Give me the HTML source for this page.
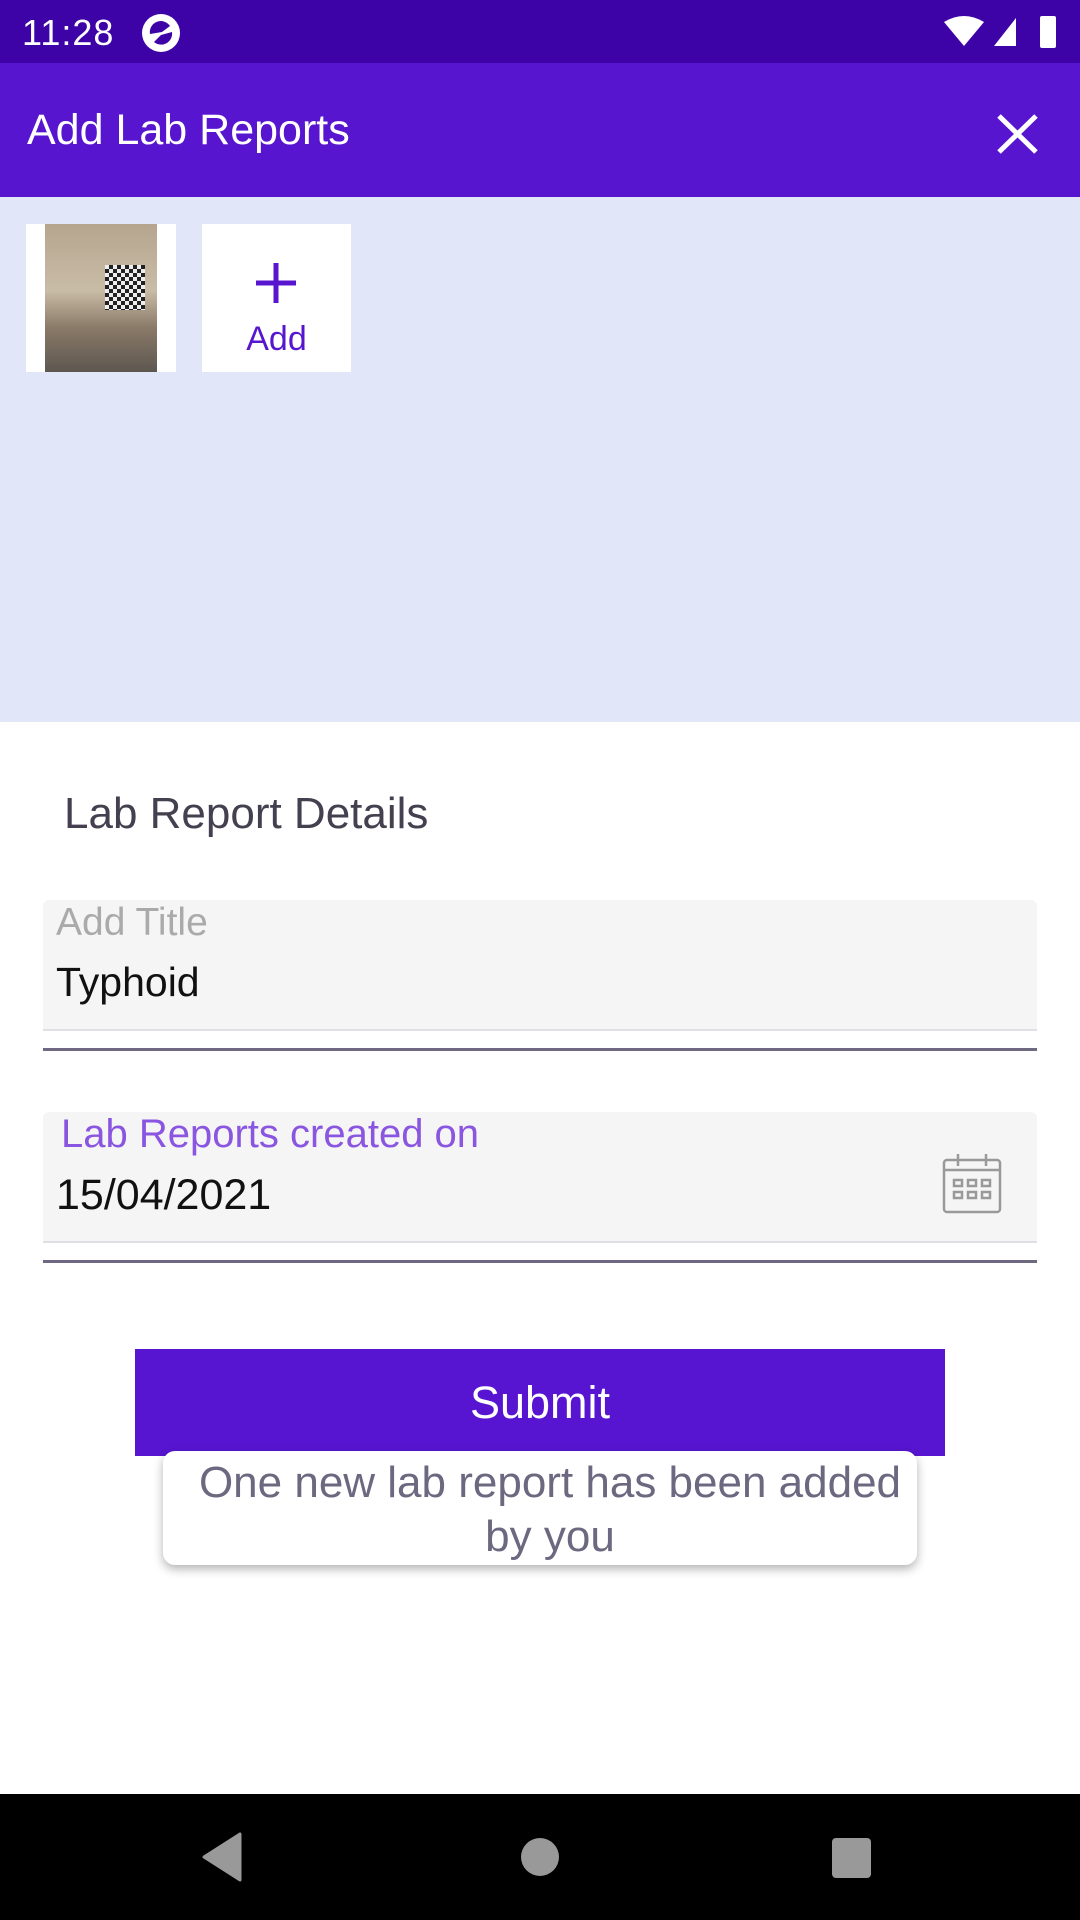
<!DOCTYPE html>
<html><head><meta charset="utf-8"><style>
*{margin:0;padding:0;box-sizing:border-box}
body{width:1080px;height:1920px;position:relative;background:#fff;font-family:"Liberation Sans",sans-serif;overflow:hidden}
.a{position:absolute;white-space:nowrap}
</style></head><body>
<div class="a" style="left:0;top:0;width:1080px;height:63px;background:#3d03a7"></div>
<div class="a" style="left:22px;top:12px;font-size:36px;color:#fff;letter-spacing:1px">11:28</div>
<svg class="a" style="left:140px;top:12px" width="42" height="42" viewBox="0 0 42 42"><circle cx="21" cy="21" r="19" fill="#fff"/><path d="M10 22 A11 11 0 0 1 30 14 L22 20 Z" fill="#3d03a7"/><path d="M32 20 A11 11 0 0 1 14 30 L21 23 Z" fill="#3d03a7"/></svg>
<svg class="a" style="left:944px;top:14px" width="120" height="36" viewBox="0 0 120 36"><path d="M0 8 Q20 -4 40 8 L20 32 Z" fill="#fff"/><path d="M50 32 L72 4 L72 32 Z" fill="#fff"/><rect x="96" y="2" width="16" height="32" rx="2" fill="#fff"/></svg>
<div class="a" style="left:0;top:63px;width:1080px;height:134px;background:#5715d0"></div>
<div class="a" style="left:27px;top:106px;font-size:43px;color:#fff">Add Lab Reports</div>
<svg class="a" style="left:995px;top:113px" width="45" height="42" viewBox="0 0 45 42"><path d="M4 3 L41 39 M41 3 L4 39" stroke="#fff" stroke-width="5"/></svg>
<div class="a" style="left:0;top:197px;width:1080px;height:525px;background:#e1e6f9"></div>
<div class="a" style="left:26px;top:224px;width:150px;height:148px;background:#fff"></div>
<div class="a" style="left:45px;top:224px;width:112px;height:148px;background:linear-gradient(180deg,#b5a58e 0%,#c9bca6 45%,#8a7a68 70%,#5e5750 100%)"></div>
<div class="a" style="left:105px;top:265px;width:40px;height:45px;background:repeating-conic-gradient(#222 0 25%,#eee 0 50%) 0 0/8px 8px"></div>
<div class="a" style="left:202px;top:224px;width:149px;height:148px;background:#fff"></div>
<svg class="a" style="left:254px;top:261px" width="44" height="44" viewBox="0 0 44 44"><path d="M22 2 V42 M2 22 H42" stroke="#5715d0" stroke-width="5"/></svg>
<div class="a" style="left:202px;top:320px;width:149px;text-align:center;font-size:34px;color:#5715d0">Add</div>
<div class="a" style="left:64px;top:789px;font-size:44px;color:#45404f">Lab Report Details</div>
<div class="a" style="left:43px;top:900px;width:994px;height:131px;background:#f5f5f5;border-radius:6px 6px 0 0;border-bottom:2px solid #e0e0e4"></div>
<div class="a" style="left:43px;top:1048px;width:994px;height:3px;background:#6e6880"></div>
<div class="a" style="left:56px;top:901px;font-size:39px;color:#aaa">Add Title</div>
<div class="a" style="left:56px;top:959px;font-size:41px;color:#111">Typhoid</div>
<div class="a" style="left:43px;top:1112px;width:994px;height:131px;background:#f5f5f5;border-radius:6px 6px 0 0;border-bottom:2px solid #e0e0e4"></div>
<div class="a" style="left:43px;top:1260px;width:994px;height:3px;background:#6e6880"></div>
<div class="a" style="left:61px;top:1112px;font-size:40px;color:#8a55e0">Lab Reports created on</div>
<div class="a" style="left:56px;top:1171px;font-size:43px;color:#111">15/04/2021</div>
<svg class="a" style="left:940px;top:1152px" width="64" height="64" viewBox="0 0 64 64" fill="none" stroke="#999" stroke-width="2.5"><rect x="4" y="8" width="56" height="52" rx="3"/><path d="M4 18 H60 M18 2 V14 M46 2 V14"/><rect x="14" y="28" width="8" height="6"/><rect x="28" y="28" width="8" height="6"/><rect x="42" y="28" width="8" height="6"/><rect x="14" y="40" width="8" height="6"/><rect x="28" y="40" width="8" height="6"/><rect x="42" y="40" width="8" height="6"/></svg>
<div class="a" style="left:135px;top:1349px;width:810px;height:107px;background:#5715d1;color:#fff;font-size:45px;text-align:center;line-height:107px">Submit</div>
<div class="a" style="left:163px;top:1451px;width:754px;height:114px;background:#fff;border-radius:12px;box-shadow:0 4px 10px rgba(0,0,0,.3)"></div>
<div class="a" style="left:163px;top:1456px;width:754px;color:#6b6880;font-size:44px;text-align:center;line-height:54px;padding-left:20px">One new lab report has been added<br>by you</div>
<div class="a" style="left:0;top:1794px;width:1080px;height:126px;background:#000"></div>
<svg class="a" style="left:200px;top:1832px" width="46" height="50" viewBox="0 0 46 50"><path d="M40 2 V48 L4 25 Z" fill="#999" stroke="#999" stroke-width="3" stroke-linejoin="round"/></svg>
<div class="a" style="left:521px;top:1838px;width:38px;height:38px;border-radius:50%;background:#999"></div>
<div class="a" style="left:832px;top:1838px;width:39px;height:40px;border-radius:4px;background:#999"></div>
</body></html>
